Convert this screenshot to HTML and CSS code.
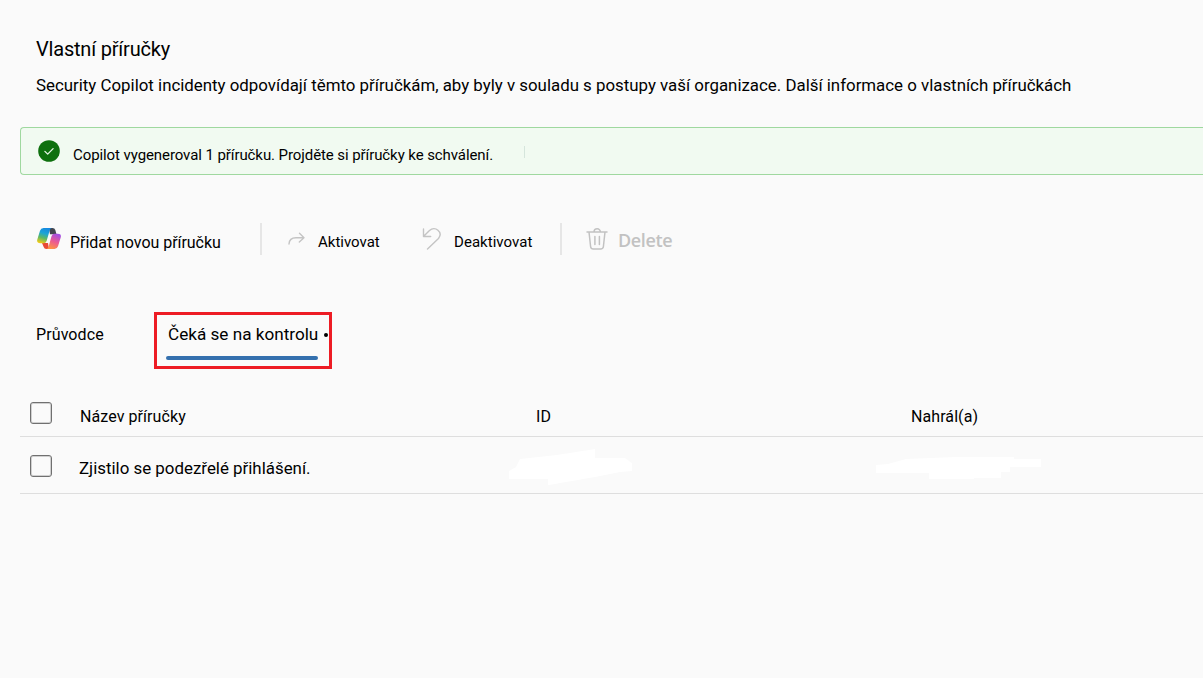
FILE: index.html
```html
<!DOCTYPE html>
<html lang="cs">
<head>
  <meta charset="UTF-8" />
  <meta name="viewport" content="width=device-width, initial-scale=1" />
  <title>Vlastní příručky</title>
  <link rel="stylesheet" href="styles.css">
</head>
<body>

  <header class="intro">
    <h1>Vlastní příručky</h1>
    <p>Security Copilot incidenty odpovídají těmto příručkám, aby byly v souladu s postupy vaší organizace. Další informace o vlastních příručkách</p>
  </header>

  <!-- Status message -->
  <div class="banner">
    <svg class="check" viewBox="0 0 22 22" width="22" height="22">
      <circle cx="11" cy="11" r="10.8" fill="#0e700e" />
      <path d="M6.9 11.4l2.8 2.7 5.4-5.5" fill="none" stroke="#e8f6e8" stroke-width="1.3" stroke-linecap="round" stroke-linejoin="round" />
    </svg>
    <span class="banner-text">Copilot vygeneroval 1 příručku. Projděte si příručky ke schválení.</span>
    <i class="caret"></i>
  </div>

  <!-- Toolbar -->
  <div class="toolbar">
    <button class="tool add">
      <svg viewBox="0 0 24 22" width="24" height="22">
        <defs>
          <linearGradient id="cool" x1="0.6" y1="0" x2="0.3" y2="1">
            <stop offset="0" stop-color="#1688e0" />
            <stop offset="0.35" stop-color="#1ba5d5" />
            <stop offset="0.65" stop-color="#5cb865" />
            <stop offset="1" stop-color="#f2cb16" />
          </linearGradient>
          <linearGradient id="warm" x1="0.7" y1="0" x2="0.3" y2="1">
            <stop offset="0" stop-color="#a24fe4" />
            <stop offset="0.5" stop-color="#ec5a91" />
            <stop offset="1" stop-color="#ff963f" />
          </linearGradient>
        </defs>
        <path d="M12 0h3.500q2.200 0 2.800 2l1.200 4.200H13z" fill="#424650" />
        <path d="M5 15h6l1 6H9.300q-2 0-2.600-2z" fill="#e84a35" />
        <path d="M6.500 0h8.500q-1.600.2-2.200 2L9.600 13q-.8 2.300-3 2.300H3.300Q-.7 15.300.3 11.500L3 2.700Q3.800 0 6.500 0z" fill="url(#cool)" />
        <path d="M17.500 21H9.200q1.700-.2 2.300-2L14.600 8q.8-2.200 3-2.200h3.100q4 0 3 3.700L21 18.300q-.8 2.700-3.500 2.700z" fill="url(#warm)" />
      </svg>
      <span>Přidat novou příručku</span>
    </button>
    <i class="divider"></i>
    <button class="tool activate">
      <svg viewBox="0 0 18 14" width="18" height="14" fill="none" stroke="#c4c4c4" stroke-width="1.400" stroke-linecap="round" stroke-linejoin="round">
        <path d="M1 12C1.200 7.500 4 5.700 8 5.700h8M11.500 1.300L16 5.700l-4.700 4.400" />
      </svg>
      <span>Aktivovat</span>
    </button>
    <button class="tool deactivate">
      <svg viewBox="0 0 20 22" width="20" height="22" fill="none" stroke="#c4c4c4" stroke-width="1.400" stroke-linecap="round" stroke-linejoin="round">
        <path d="M1.500 1v7.500h7.200M1.700 8.200L7.500 2.500C13-2.300 21.500 4 16.500 10.500L5.500 21" />
      </svg>
      <span>Deaktivovat</span>
    </button>
    <i class="divider"></i>
    <button class="tool delete">
      <svg viewBox="0 0 22 22" width="22" height="22" fill="none" stroke="#c2c2c2" stroke-width="1.500" stroke-linecap="round" stroke-linejoin="round">
        <path d="M1 4h20M8 4a3.200 3.200 0 0 1 6.400 0M3 4l1.600 14.500q.3 2.500 2.800 2.500h7.200q2.500 0 2.800-2.500L19 4M8.900 8.500v8M13.400 8.500v8" />
      </svg>
      <span>Delete</span>
    </button>
  </div>

  <!-- Tabs -->
  <nav class="tabs">
    <a class="tab guide">Průvodce</a>
    <div class="highlight">
      <a class="tab active"><span>Čeká se na kontrolu</span></a><b class="dot"></b>
    </div>
  </nav>

  <!-- Playbook list -->
  <div class="table">
    <div class="row head">
      <i class="checkbox"></i>
      <span class="name">Název příručky</span>
      <span class="id">ID</span>
      <span class="by">Nahrál(a)</span>
    </div>
    <div class="row item">
      <i class="checkbox"></i>
      <span class="name">Zjistilo se podezřelé přihlášení.</span>
      <span class="id">
        <svg class="smudge" viewBox="0 0 123 36" width="123" height="36">
          <path d="M0 30v-8l7-4 4-8 37-4 38-6v9h30l7 5v8l-12 1-25 5-29 5-17 3H39v-6z" fill="#fff" />
        </svg>
      </span>
      <span class="by">
        <svg class="smudge" viewBox="0 0 165 22" width="165" height="22">
          <path d="M0 16V8l12-1 18-5 50-2h58v2h27v8h-31v5h-9v6H98v1H53v-6z" fill="#fff" />
        </svg>
      </span>
    </div>
  </div>

</body>
</html>
```
FILE: styles.css
```css
* { box-sizing: border-box; margin: 0; padding: 0; }
body {
  font-family: Roboto, 'Liberation Sans', sans-serif;
  font-size: 16px;
  background: #fafafa;
  color: #000;
}
svg { display: block; flex: none; }
span, a, p, h1 { white-space: nowrap; }

.intro {
  height: 127px;
  padding: 35px 0 0 36px;
}
.intro h1 {
  font-size: 20px;
  font-weight: 400;
  line-height: 28px;
  letter-spacing: -0.2px;
}
.intro p {
  width: fit-content;
  margin-top: 12px;
  line-height: 22px;
  transform: scaleX(1.053);
  transform-origin: 0 50%;
}

.banner {
  display: flex;
  height: 48px;
  margin-left: 20px;
  padding: 12px 0 0 17px;
  background: #f1faf1;
  border: 1px solid #9fd89f;
  border-right: none;
  border-radius: 4px 0 0 4px;
}
.banner-text {
  width: 420px;
  margin-left: 13px;
  padding-top: 5px;
  font-size: 15px;
  line-height: 20px;
  letter-spacing: -0.085px;
}
.caret {
  width: 1px;
  height: 12px;
  margin: 6px 0 0 31px;
  background: #d5e5dc;
}

.toolbar {
  display: flex;
  align-items: center;
  height: 32px;
  margin: 48px 0 0 37px;
}
.tool {
  display: flex;
  align-items: center;
  border: none;
  background: none;
  font: inherit;
  color: inherit;
}
.tool span { line-height: 20px; padding-top: 6px; }
.divider {
  width: 2px;
  height: 32px;
  background: #e6e6e6;
}
.add { width: 223px; gap: 9px; letter-spacing: -0.04px; }
.add span { padding-top: 7px; }
.activate { width: 134px; margin-left: 26px; gap: 12px; font-size: 15px; }
.deactivate { width: 138px; gap: 12px; font-size: 15px; letter-spacing: 0.04px; }
.delete {
  margin-left: 24px;
  gap: 10px;
  font-family: 'Open Sans', sans-serif;
  font-size: 18px;
  font-weight: 600;
  letter-spacing: -0.35px;
  color: #c2c2c2;
}
.delete span { padding-top: 2px; }

.tabs {
  display: flex;
  height: 57px;
  margin: 57px 0 0 36px;
}
.tab { line-height: 20px; }
.guide { width: 118px; padding-top: 13px; letter-spacing: 0.1px; }
.highlight {
  display: flex;
  width: 178px;
  padding: 9px 0 0 9px;
  border: 3px solid #ed1c24;
}
.active {
  position: relative;
  width: 152px;
  height: 36px;
  padding: 1px 0 0 2px;
}
.active span {
  display: inline-block;
  transform: scaleX(1.071);
  transform-origin: 0 50%;
}
.active::after {
  content: "";
  position: absolute;
  left: 0;
  bottom: 0;
  width: 152px;
  height: 4px;
  border-radius: 2px;
  background: #3470ae;
}
.dot {
  width: 4px;
  height: 4px;
  margin: 9px 0 0 6px;
  border-radius: 50%;
  background: #000;
}

.table { margin: 21px 0 0 20px; }
.row {
  display: grid;
  grid-template-columns: 60px 456px 375px 1fr;
  height: 57px;
  padding-top: 18px;
  border-bottom: 1px solid #dedede;
}
.head { height: 47px; padding-top: 12px; }
.row span { line-height: 28px; }
.head span { line-height: 30px; letter-spacing: 0.08px; }
.item .name {
  margin-left: -1px;
  transform: scaleX(1.055);
  transform-origin: 0 50%;
}
.checkbox {
  width: 22px;
  height: 22px;
  margin-left: 10px;
  border: 1px solid #707070;
  border-radius: 3px;
  box-shadow: inset 0 0 0 1px #d0d0d0;
}
.row .smudge { margin: -6px 0 0 -27px; }
.row .by .smudge { margin: 2px 0 0 -35px; }
```
